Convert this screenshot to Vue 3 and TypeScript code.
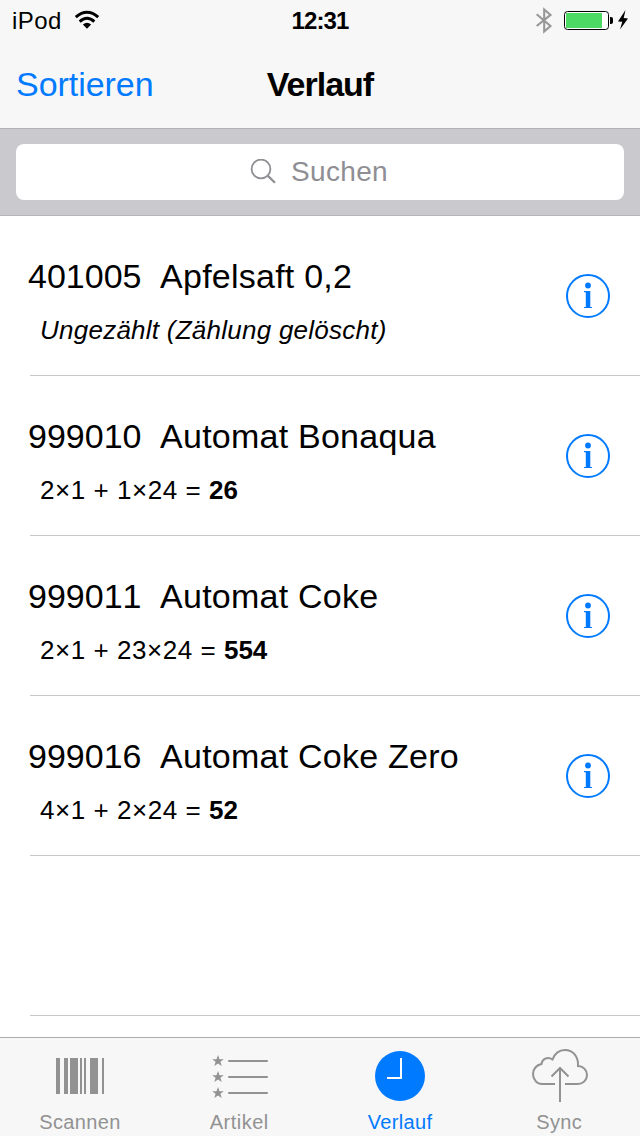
<script setup lang="ts">
interface Entry {
  code: string
  name: string
  detail: string
  total?: string
  cleared?: boolean
}

const entries: Entry[] = [
  { code: '401005', name: 'Apfelsaft 0,2', detail: 'Ungezählt (Zählung gelöscht)', cleared: true },
  { code: '999010', name: 'Automat Bonaqua', detail: '2×1 + 1×24 = ', total: '26' },
  { code: '999011', name: 'Automat Coke', detail: '2×1 + 23×24 = ', total: '554' },
  { code: '999016', name: 'Automat Coke Zero', detail: '4×1 + 2×24 = ', total: '52' },
]

// Barcode stripes as [x, width]
const bars = [
  [56, 4], [64, 4], [70, 8], [80, 2], [84, 2], [90, 8], [102, 2],
]
</script>

<template>
  <div class="screen">
    <header class="top">
      <div class="status">
        <div class="carrier">
          <span>iPod</span>
          <svg width="26" height="20" viewBox="0 0 26 20">
            <g fill="none" stroke="#000" stroke-width="3">
              <path d="M1.8 7.1 Q13 -2.6 24.2 7.1" />
              <path d="M5.7 11.6 Q13 5 20.3 11.6" />
            </g>
            <path d="M8.9 14.6 Q13 11 17.1 14.6 L13 18.8Z" />
          </svg>
        </div>
        <div class="time">12:31</div>
        <svg class="power" width="100" height="30" viewBox="0 0 100 30">
          <path d="M6.7 9.2 L20.5 21 L14.2 26.5 V4.5 L20.5 9.9 L6.7 21" fill="none" stroke="#979797" stroke-width="2.1" />
          <rect x="34.5" y="6.5" width="44" height="18" rx="3" fill="#fff" stroke="#000" />
          <rect x="36" y="8" width="36" height="15" fill="#4cd964" />
          <path d="M80 12 h1 a2 2 0 0 1 2 2 v3 a2 2 0 0 1 -2 2 h-1z" />
          <path d="M95.5 5 L88 16.5 L92.3 16.8 L90 24.5 L98 13.4 L93.7 13.1Z" />
        </svg>
      </div>
      <div class="nav">
        <span class="sort">Sortieren</span>
        <h1>Verlauf</h1>
        <span />
      </div>
    </header>

    <div class="search">
      <div class="field">
        <svg width="26" height="26" viewBox="0 0 26 26" fill="none" stroke="#8e8e93">
          <circle cx="11" cy="10" r="9.4" stroke-width="1.8" />
          <path d="M17.6 16.6 L25 23.8" stroke-width="2.2" />
        </svg>
        <span>Suchen</span>
      </div>
    </div>

    <main>
      <div v-for="e in entries" :key="e.code" class="row">
        <div class="text">
          <div class="title">
            <span class="code">{{ e.code }}</span><span class="name">{{ e.name }}</span>
          </div>
          <div class="detail" :class="{ cleared: e.cleared }">{{ e.detail }}<b v-if="e.total">{{ e.total }}</b></div>
        </div>
        <svg class="info" width="44" height="44" viewBox="0 0 44 44">
          <circle cx="22" cy="22" r="21" fill="none" stroke="#007aff" stroke-width="2" />
          <circle cx="22" cy="11.5" r="2.9" fill="#007aff" />
          <path d="M18 17 H24.3 V32.9 H26 V34.1 H18 V32.9 H19.8 V18.2 H18Z" fill="#007aff" />
        </svg>
      </div>
      <div class="row" />
    </main>

    <nav class="tabs">
      <div class="tab">
        <svg width="160" height="70" viewBox="0 0 160 70" fill="#929292">
          <rect v-for="[x, w] in bars" :key="x" :x="x" y="20" :width="w" height="36" />
        </svg>
        <span>Scannen</span>
      </div>
      <div class="tab artikel">
        <svg width="160" height="70" viewBox="0 0 160 70">
          <g v-for="y in [23, 39, 55]" :key="y" :transform="`translate(58 ${y})`">
            <path d="M0 -6 L1.5 -1.8 H5.8 L2.4 .8 L3.7 5 L0 2.5 L-3.7 5 L-2.4 .8 L-5.8 -1.8 H-1.5Z" fill="#929292" />
            <path d="M11 0 H49" stroke="#929292" stroke-width="2" stroke-linecap="round" />
          </g>
        </svg>
        <span>Artikel</span>
      </div>
      <div class="tab active">
        <svg width="160" height="70" viewBox="0 0 160 70">
          <circle cx="80" cy="38" r="25" fill="#007aff" />
          <path d="M81 20 V40 H67" fill="none" stroke="#fff" stroke-width="2" />
        </svg>
        <span>Verlauf</span>
      </div>
      <div class="tab sync">
        <svg width="160" height="70" viewBox="0 0 160 70" fill="none" stroke="#929292" stroke-width="2">
          <path d="M75 46 H62 C57 46 53 41.5 53 36 C53 31 56.5 27 61.5 26 C62 21 67.5 18 72.5 21.5 C75 15 79.5 12 85 12 C93 12 98.5 18.5 98 28 C103 28 107 32 107 37 C107 42 103 46 98 46 H85" />
          <path d="M80 64 V30 M71.5 38.5 L80 30 L88.5 38.5" />
        </svg>
        <span>Sync</span>
      </div>
    </nav>
  </div>
</template>

<style>
body {
  margin: 0;
  background: #fff;
}
</style>

<style scoped>
.screen {
  width: 640px;
  height: 1136px;
  display: flex;
  flex-direction: column;
  overflow: hidden;
  background: #fff;
  color: #000;
  font-family: "Liberation Sans", Arial, sans-serif;
}

svg {
  display: block;
  flex: none;
}

.top {
  box-sizing: border-box;
  height: 129px;
  background: #f7f7f7;
  border-bottom: 1px solid #b1b1b6;
}

.status {
  height: 40px;
  display: grid;
  grid-template-columns: 1fr auto 1fr;
  font-size: 24px;
  line-height: 42px;
}

.carrier {
  display: flex;
  gap: 12px;
  padding-left: 12px;
  letter-spacing: 0.4px;
}

.carrier svg {
  margin-top: 10px;
}

.time {
  font-weight: 700;
  letter-spacing: -0.9px;
}

.power {
  justify-self: end;
  margin: 5px 10px 0 0;
}

.nav {
  height: 88px;
  display: grid;
  grid-template-columns: 1fr auto 1fr;
  align-items: center;
  font-size: 34px;
  line-height: 88px;
}

.sort {
  padding-left: 16px;
  color: #007aff;
  letter-spacing: -0.05px;
}

h1 {
  margin: 0;
  font-size: 34px;
  font-weight: 700;
  letter-spacing: -1px;
}

.search {
  box-sizing: border-box;
  height: 87px;
  padding: 15px 16px;
  background: #c9c9ce;
  border-bottom: 1px solid #b4b4b9;
}

.field {
  height: 56px;
  display: flex;
  justify-content: center;
  gap: 15px;
  padding-right: 2px;
  border-radius: 8px;
  background: #fff;
  color: #8e8e93;
  font-size: 28px;
  line-height: 55px;
  letter-spacing: 0.3px;
}

.field svg {
  margin-top: 15px;
}

main {
  flex: 1;
  overflow: hidden;
}

.row {
  box-sizing: border-box;
  height: 160px;
  margin-left: 30px;
  padding-right: 30px;
  display: flex;
  justify-content: space-between;
  border-bottom: 1px solid #c8c7cc;
}

.text {
  margin-left: -2px;
  padding-top: 40px;
  white-space: pre;
}

.title {
  display: flex;
  gap: 18.6px;
  font-size: 34px;
  line-height: 40px;
}

.code {
  font-kerning: none;
}

.name {
  letter-spacing: 0.24px;
}

.detail {
  margin: 18px 0 0 12px;
  font-size: 26px;
  line-height: 32px;
  letter-spacing: 0.54px;
}

.detail b {
  letter-spacing: 0;
}

.cleared {
  font-style: italic;
  letter-spacing: 0.25px;
}

.info {
  margin-top: 58px;
}

.tabs {
  box-sizing: border-box;
  height: 99px;
  display: grid;
  grid-template-columns: repeat(4, 160px);
  background: #f7f7f7;
  border-top: 1px solid #acacac;
}

.tab {
  display: flex;
  flex-direction: column;
  align-items: center;
  color: #929292;
  font-size: 20px;
  line-height: 28px;
  letter-spacing: 0.35px;
}

.artikel {
  letter-spacing: 0.5px;
}

.artikel span,
.sync span {
  padding-right: 1.5px;
}

.tab.active {
  color: #007aff;
}
</style>
